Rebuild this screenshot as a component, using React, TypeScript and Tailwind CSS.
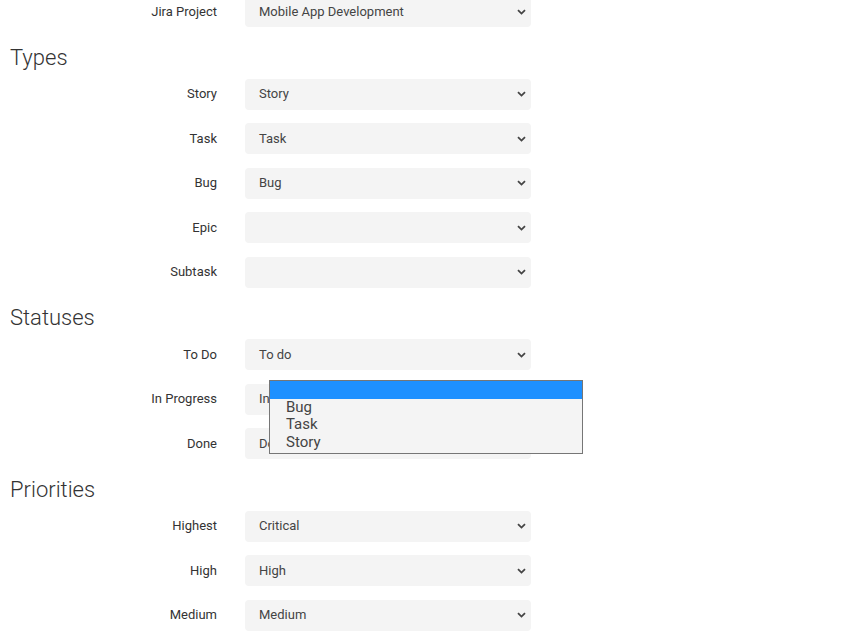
import React from "react";

type Row = { label: string; value: string };

const sections: { title: string; rows: Row[] }[] = [
	{
		title: "Types",
		rows: [
			{ label: "Story", value: "Story" },
			{ label: "Task", value: "Task" },
			{ label: "Bug", value: "Bug" },
			{ label: "Epic", value: "" },
			{ label: "Subtask", value: "" },
		],
	},
	{
		title: "Statuses",
		rows: [
			{ label: "To Do", value: "To do" },
			{ label: "In Progress", value: "In Progress" },
			{ label: "Done", value: "Done" },
		],
	},
	{
		title: "Priorities",
		rows: [
			{ label: "Highest", value: "Critical" },
			{ label: "High", value: "High" },
			{ label: "Medium", value: "Medium" },
		],
	},
];

function Chevron() {
	return (
		<svg width="9" height="6" viewBox="0 0 9 6" className="shrink-0">
			<path d="M1 1.2 L4.5 4.6 L8 1.2" fill="none" stroke="#444" strokeWidth="1.8" />
		</svg>
	);
}

function FieldRow({ label, value }: Row) {
	return (
		<div className="flex items-center mb-[13.5px]">
			<label className="w-[217px] text-right text-[13px] text-[#333]">{label}</label>
			<div className="ml-[28px] w-[286px] h-[31px] rounded-[4px] bg-[#f4f4f4] flex items-center justify-between pl-[14px] pr-[5px] text-[13px] text-[#444]">
				<span>{value}</span>
				<Chevron />
			</div>
		</div>
	);
}

export default function App() {
	return (
		<div className="relative w-[846px] h-[631px] overflow-hidden bg-white font-['Roboto',sans-serif]">
			<div className="-mt-[4px]">
				<FieldRow label="Jira Project" value="Mobile App Development" />
				{sections.map((s) => (
					<div key={s.title}>
						<h2 className="pt-[2px] mb-[6px] pl-[10px] text-[22px] leading-[30px] font-light text-[#333]">
							{s.title}
						</h2>
						{s.rows.map((r) => (
							<FieldRow key={r.label} {...r} />
						))}
					</div>
				))}
			</div>

			{/* open listbox */}
			<div className="absolute left-[269px] top-[380px] w-[314px] border border-[#767676] bg-[#f4f4f4] pb-[1.5px]">
				<div className="h-[17.7px] bg-[#1e90ff]" />
				{["Bug", "Task", "Story"].map((o) => (
					<div key={o} className="pl-[16px] text-[15px] leading-[17.6px] text-[#444]">
						{o}
					</div>
				))}
			</div>
		</div>
	);
}
